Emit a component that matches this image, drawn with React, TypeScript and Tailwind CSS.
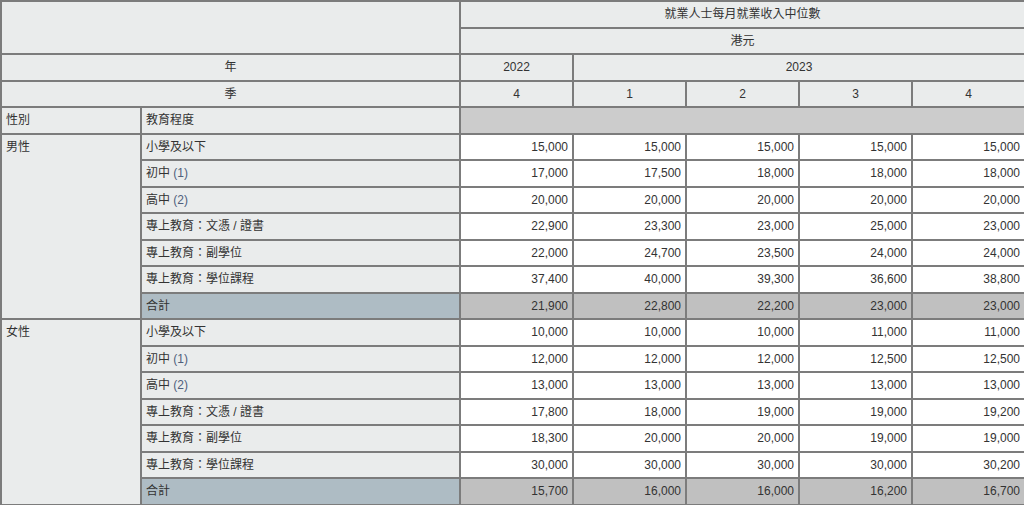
import React from "react";

type Row = { label: string; note?: string; values: string[]; total?: boolean };

const male: Row[] = [
  { label: "小學及以下", values: ["15,000", "15,000", "15,000", "15,000", "15,000"] },
  { label: "初中", note: "(1)", values: ["17,000", "17,500", "18,000", "18,000", "18,000"] },
  { label: "高中", note: "(2)", values: ["20,000", "20,000", "20,000", "20,000", "20,000"] },
  { label: "專上教育：文憑 / 證書", values: ["22,900", "23,300", "23,000", "25,000", "23,000"] },
  { label: "專上教育：副學位", values: ["22,000", "24,700", "23,500", "24,000", "24,000"] },
  { label: "專上教育：學位課程", values: ["37,400", "40,000", "39,300", "36,600", "38,800"] },
  { label: "合計", values: ["21,900", "22,800", "22,200", "23,000", "23,000"], total: true },
];

const female: Row[] = [
  { label: "小學及以下", values: ["10,000", "10,000", "10,000", "11,000", "11,000"] },
  { label: "初中", note: "(1)", values: ["12,000", "12,000", "12,000", "12,500", "12,500"] },
  { label: "高中", note: "(2)", values: ["13,000", "13,000", "13,000", "13,000", "13,000"] },
  { label: "專上教育：文憑 / 證書", values: ["17,800", "18,000", "19,000", "19,000", "19,200"] },
  { label: "專上教育：副學位", values: ["18,300", "20,000", "20,000", "19,000", "19,000"] },
  { label: "專上教育：學位課程", values: ["30,000", "30,000", "30,000", "30,000", "30,200"] },
  { label: "合計", values: ["15,700", "16,000", "16,000", "16,200", "16,700"], total: true },
];

const cell = "border border-[#7c7c7c] px-[4px] py-0 align-middle";
const hdr = `${cell} bg-[#eaecec]`;

function Group({ name, rows }: { name: string; rows: Row[] }) {
  return (
    <>
      {rows.map((r, i) => (
        <tr key={i} className="h-[26.5px]">
          {i === 0 && (
            <td rowSpan={rows.length} className={`${hdr} align-top pt-[5px] text-left`}>
              {name}
            </td>
          )}
          <td className={`${cell} text-left ${r.total ? "bg-[#aebcc4]" : "bg-[#eaecec]"}`}>
            {r.label}
            {r.note && <span className="text-[#4f5f7c]"> {r.note}</span>}
          </td>
          {r.values.map((v, j) => (
            <td key={j} className={`${cell} text-right ${r.total ? "bg-[#c0c0c0]" : "bg-white"}`}>
              {v}
            </td>
          ))}
        </tr>
      ))}
    </>
  );
}

export default function App() {
  return (
    <div className="w-[1024px] h-[505px] overflow-hidden bg-white">
      <table
        className="table-fixed border-separate border-spacing-0 border border-[#7c7c7c] w-[1026px] text-[12px] leading-[14px] text-[#333]"
        style={{ fontFamily: '"Liberation Sans", Arial, "Noto Sans CJK TC", sans-serif' }}
      >
        <colgroup>
          <col className="w-[140px]" />
          <col className="w-[319px]" />
          <col className="w-[113px]" />
          <col className="w-[113px]" />
          <col className="w-[113px]" />
          <col className="w-[113px]" />
          <col className="w-[113px]" />
        </colgroup>
        <tbody>
          <tr className="h-[26.5px]">
            <td colSpan={2} rowSpan={2} className={hdr}></td>
            <td colSpan={5} className={`${hdr} text-center`}>就業人士每月就業收入中位數</td>
          </tr>
          <tr className="h-[26.5px]">
            <td colSpan={5} className={`${hdr} text-center`}>港元</td>
          </tr>
          <tr className="h-[26.5px]">
            <td colSpan={2} className={`${hdr} text-center`}>年</td>
            <td className={`${hdr} text-center`}>2022</td>
            <td colSpan={4} className={`${hdr} text-center`}>2023</td>
          </tr>
          <tr className="h-[26.5px]">
            <td colSpan={2} className={`${hdr} text-center`}>季</td>
            <td className={`${hdr} text-center`}>4</td>
            <td className={`${hdr} text-center`}>1</td>
            <td className={`${hdr} text-center`}>2</td>
            <td className={`${hdr} text-center`}>3</td>
            <td className={`${hdr} text-center`}>4</td>
          </tr>
          <tr className="h-[26.5px]">
            <td className={`${hdr} text-left`}>性別</td>
            <td className={`${hdr} text-left`}>教育程度</td>
            <td colSpan={5} className={`${cell} bg-[#cccccc]`}></td>
          </tr>
          <Group name="男性" rows={male} />
          <Group name="女性" rows={female} />
        </tbody>
      </table>
    </div>
  );
}
